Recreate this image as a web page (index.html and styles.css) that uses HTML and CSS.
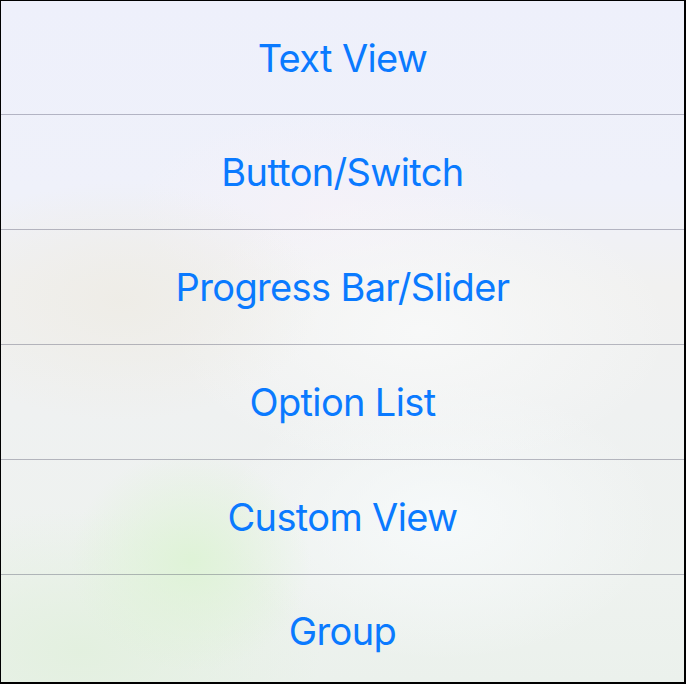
FILE: index.html
```html
<!DOCTYPE html>
<html lang="en">
<head>
<meta charset="utf-8">
<title>Action Sheet</title>
<link rel="stylesheet" href="styles.css">
</head>
<body>
<div class="sheet">
  <div class="row first">Text View</div>
  <div class="row">Button/Switch</div>
  <div class="row">Progress Bar/Slider</div>
  <div class="row">Option List</div>
  <div class="row">Custom View</div>
  <div class="row last">Group</div>
</div>
</body>
</html>
```
FILE: styles.css
```css
html, body {
  margin: 0;
  padding: 0;
  width: 686px;
  height: 684px;
  overflow: hidden;
  background: #000;
}
.sheet {
  box-sizing: border-box;
  width: 686px;
  height: 684px;
  border-style: solid;
  border-color: #000;
  border-width: 1px 2px 2px 1px;
  display: flex;
  flex-direction: column;
  background:
    radial-gradient(ellipse 120px 110px at 190px 560px, rgba(222, 243, 214, 0.95), rgba(222, 243, 214, 0) 100%),
    radial-gradient(ellipse 240px 140px at 80px 650px, rgba(226, 240, 222, 0.9), rgba(226, 240, 222, 0) 100%),
    radial-gradient(ellipse 200px 120px at 120px 300px, rgba(238, 236, 230, 0.9), rgba(238, 236, 230, 0) 100%),
    radial-gradient(ellipse 250px 140px at 420px 330px, rgba(248, 249, 249, 0.9), rgba(248, 249, 249, 0) 100%),
    radial-gradient(ellipse 220px 140px at 440px 520px, rgba(247, 250, 251, 0.9), rgba(247, 250, 251, 0) 100%),
    radial-gradient(ellipse 200px 100px at 330px 210px, rgba(246, 242, 248, 0.8), rgba(246, 242, 248, 0) 100%),
    linear-gradient(180deg, #eef0fb 0%, #eff1fa 28%, #f1f1f0 42%, #eff1f1 60%, #eef2ef 85%, #ebf1ec 100%);
}
.row {
  box-sizing: border-box;
  height: 115px;
  flex: none;
  display: flex;
  align-items: center;
  justify-content: center;
  border-bottom: 1px solid rgba(40, 40, 70, 0.3);
  color: #0a7aff;
  font-family: "Inter", "Roboto", "Liberation Sans", sans-serif;
  font-size: 38px;
  letter-spacing: -0.65px;
}
.row.first {
  height: 114px;
}
.row.last {
  flex: 1 1 auto;
  height: auto;
  border-bottom: none;
  padding-top: 5px;
}
```
